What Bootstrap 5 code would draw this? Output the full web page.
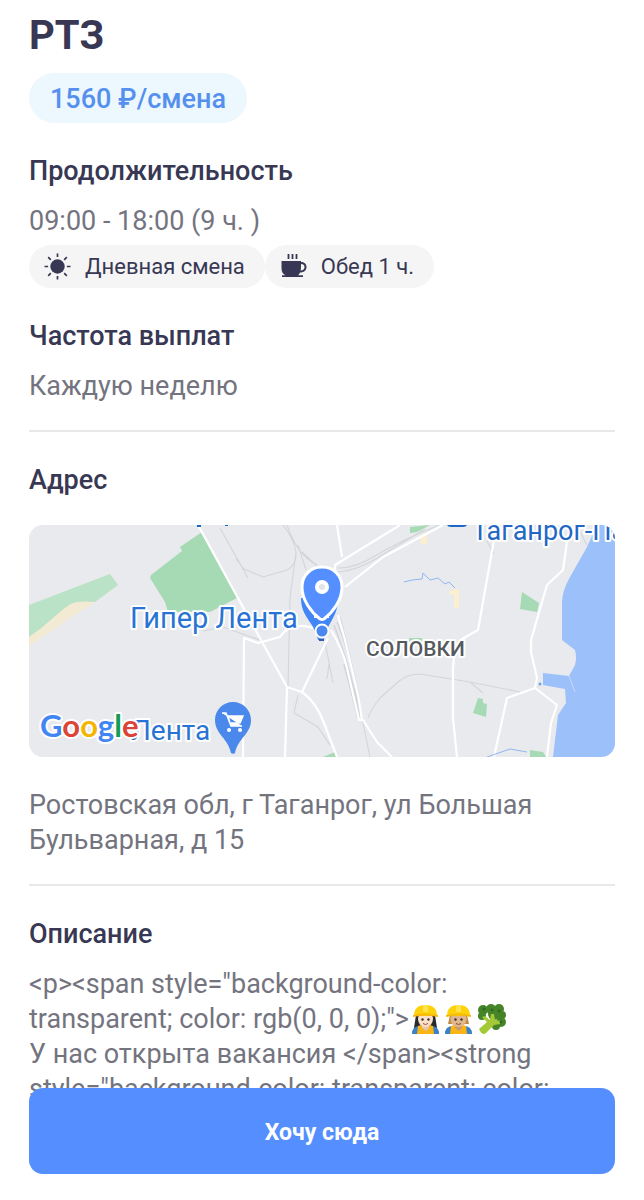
<!DOCTYPE html>
<html lang="ru">
<head>
<meta charset="utf-8">
<meta name="viewport" content="width=device-width, initial-scale=1">
<title>РТЗ</title>
<link href="https://cdn.jsdelivr.net/npm/bootstrap@5.3.0/dist/css/bootstrap.min.css" rel="stylesheet">
<style>
  :root { --ink: #383854; --muted-ink: #74747f; --accent: #548eff; --side: 29px; }
  body { font-family: Roboto, "Liberation Sans", sans-serif; background: #fff; color: var(--muted-ink); font-size: 27px; line-height: 35px; }
  .vacancy { padding: 12px var(--side) 0; }
  .vacancy h1 { font-size: 40px; line-height: 48px; font-weight: 700; color: var(--ink); margin: 0 0 13px; }
  .vacancy h2 { font-size: 27px; line-height: 32px; font-weight: 500; color: var(--ink); margin: 0 0 17px; }
  .block { margin-top: 32px; }
  .pay { background: #edf7fe; color: #5590ee; font-size: 27px; line-height: 34px; font-weight: 500; padding: 9px 21px 7px; }
  .chips { margin-top: 6px; }
  .chip { background: #f5f5f5; color: var(--ink); font-size: 22px; line-height: 27px; padding: 8px 20px 8px 15px; gap: 14px; }
  .chip svg { width: 27px; height: 27px; }
  .rule { height: 2px; background: #e8e8ea; opacity: 1; border: 0; margin: 26px 0 0; }
  .map { border-radius: 14px; margin-top: 29px; }
  .map text { font-family: Roboto, sans-serif; stroke: #fff; stroke-width: 4px; stroke-linejoin: round; paint-order: stroke; }
  .map .brand { font-family: Lato, sans-serif; font-weight: 700; }
  .address { margin: 31px 0 0; }
  .emoji { width: 29px; height: 30px; margin: -4px 2px 0; }
  .action { padding: 0 var(--side) 26px; }
  .action .btn { --bs-btn-color: #fff; --bs-btn-bg: var(--accent); --bs-btn-border-width: 0; --bs-btn-hover-color: #fff; --bs-btn-hover-bg: #3f7cf2; font-size: 23px; line-height: 30px; font-weight: 700; padding: 30px 16px 26px; border-radius: 14px; }
</style>
</head>
<body>
<main class="vacancy">
  <h1>РТЗ</h1>
  <div class="d-flex"><span class="pay rounded-pill">1560 ₽/смена</span></div>

  <section class="block">
    <h2>Продолжительность</h2>
    <p class="m-0">09:00 - 18:00 (9 ч. )</p>
    <div class="chips d-flex flex-wrap">
      <span class="chip rounded-pill d-flex align-items-center">
        <svg viewBox="0 0 27 27" aria-hidden="true"><circle cx="13.5" cy="13.5" r="7.2" fill="#383854"/><path d="M13.5 .5v3.6M13.5 22.9v3.6M.5 13.5h3.6M22.9 13.5h3.6M4.2 4.2l2.6 2.6M20.2 20.2l2.6 2.6M4.2 22.8l2.6-2.6M20.2 6.8l2.6-2.6" stroke="#383854" stroke-width="1.7"/></svg>
        Дневная смена
      </span>
      <span class="chip rounded-pill d-flex align-items-center">
        <svg viewBox="0 0 27 27" aria-hidden="true"><path d="M8.500 1v5M12.500 1v5M16.500 1v5" stroke="#383854" stroke-width="1.800"/><path d="M1.500 8H21v1c3 0 5.500 1.600 5.500 5s-2.500 5.500-6.500 5.500c-.6 1.600-1.200 2.200-2 2.700H23V24H2v-1.800h3.500C3 21 1.500 19 1.500 15zM21 11v3c0 1.500-.1 2.500-.4 3.500 2.600 0 3.900-1.300 3.900-3.500 0-1.900-1.300-3-3.500-3z" fill="#383854" fill-rule="evenodd"/></svg>
        Обед 1 ч.
      </span>
    </div>
  </section>

  <section class="block">
    <h2>Частота выплат</h2>
    <p class="m-0">Каждую неделю</p>
  </section>
  <hr class="rule">

  <section class="block">
    <h2 class="mb-0">Адрес</h2>
    <svg class="map d-block w-100" viewBox="29 525 586 232" role="img" aria-label="Карта">
      <rect x="29" y="525" width="586" height="232" fill="#e8eaed"/>
      <!-- parks and sand -->
      <path d="M29 605 110 574 118 585 95 602H78L29 637z" fill="#b9e2c6"/>
      <path d="M29 637C50 624 66 602 78 602q8-1 17 0L70 618 29 646z" fill="#f3ead4"/>
      <g fill="#a6dab4">
        <path d="M202 532 180 547l2 4-31 24-1 3 15 24 3 10h42l27-14z"/>
        <path d="m522 592 17 11-2 9-17-3zM410 527l20-2-13 7-7 1zM409 638h13v4h-13zM478 698l5 1v4l4 1-1 13-13-4zM530 750l13 2 3 5h-16zM323 757l12-5 2 5z"/>
      </g>
      <path d="M420 535h7v9h-6zM450 591l5-2h4v19h-5v-14l-5 1z" fill="#fbefcf"/>
      <!-- the bay -->
      <path d="m597 525-10 22-17 30q-8 14-8 26v37l13 10q2 8 0 15l-6 11-26-3v12l22 4 1 14-8 12-5 42h62V525z" fill="#9cc0fa"/>
      <path d="M569 676l6 16" stroke="#c8d9f5" fill="none"/>
      <circle cx="540" cy="684" r="1.500" fill="#6ea2ee"/>
      <!-- railways and lanes -->
      <g fill="none" stroke="#d3d5d8" stroke-width="1.100">
        <path d="m220 528 28 50M236 559l8 10 19 8 24-7q10-5 9-18-2-13-13-27M287 525q10 30 30 40M296 552l-6 46-2 89M298 545l8 25M302 552l16 15M337 568q16 1 38-12 26-16 65-31M337 572q22-1 50-20l38-23M325 642l8 41M329 664l-2 15M298 695l-4 18 24 14 12 18M362 718l8 39M368 718q3-9 12-20l18-16q9-8 22-8l50 8 50 10M470 682l13 11M203 631l20-4 40 14M487 541l7 13M579 530l8 15"/>
        <path d="M334 625q14 36 27 92M337 622q13 30 24 92M340 617q9 35 19 80" stroke-width="1.500"/>
        <path d="M345 664q8 28 14 54" stroke-width="4"/>
      </g>
      <!-- roads -->
      <g fill="none" stroke="#fff" stroke-width="2.200" stroke-linejoin="round">
        <path d="m198 525 63 115 26 47 15 5q14 10 22 31l13 34M302 692l26-54"/>
        <path d="m331 630q12 20 16 38l12 52h4l14 22 15 15M338 615l7 25 13 55 4 25M335 570v-5l65-40M345 587l38-30 60-32M494 540l-16 90-16 9-7 9-2 20v50l4 39M567 542l-4 28-16 15-16 55v12l6 26-2 10-28 10-13 59M535 688l22 17-6 18-4 34"/>
        <path d="M337 525l5 32M243 757l1-119 14 5 22-6q10-16 33-9M285 757l2-70"/>
      </g>
      <path d="m404 582 8-2 10-1 1-6 7 7 8-2 7 6 4-2 6 6M487 757l23-8 17 3" fill="none" stroke="#91b6ef"/>
      <!-- place labels -->
      <path d="M197 525h4v2h-4zM225 525h3v1h-3zM447 525h20q-1 2-4 2h-12q-3 0-4-2z" fill="#1d66c4"/>
      <text x="130" y="628" font-size="29" fill="#2873d3">Гипер Лента</text>
      <text x="472" y="540" font-size="27" fill="#2367c5">Таганрог-Па</text>
      <text x="366" y="656" font-size="21" font-weight="500" fill="#56595e">СОЛОВКИ</text>
      <text x="131" y="740" font-size="28" fill="#2873d3">Лента</text>
      <text class="brand" x="40" y="737" font-size="31" fill="#4285f4">G<tspan fill="#db4437">o</tspan><tspan fill="#f4b400">o</tspan><tspan>g</tspan><tspan fill="#0f9d58">l</tspan><tspan fill="#db4437">e</tspan></text>
      <!-- shop pin -->
      <path d="M233 702c10 0 18 8 18 18 0 14-13 18-16 33-1 1-3 1-4 0-3-15-16-19-16-33 0-10 8-18 18-18z" fill="#4a88ec"/>
      <path d="M222 713h4l5 13h11M228 716h15l-3 7h-10z" fill="#fff" stroke="#fff" stroke-width="1.500"/>
      <circle cx="229" cy="730" r="2" fill="#fff"/><circle cx="240" cy="730" r="2" fill="#fff"/>
      <!-- selected pin -->
      <path d="M301 598c0 20 14 24 17 42h6c3-18 14-22 14-42z" fill="#4285f4"/>
      <path d="M314 612h15v6h-15z" fill="#fff"/>
      <path d="M322 567c12 0 20 9 20 20 0 13-9 25-18 32q-2 1-4 0c-9-7-18-19-18-32 0-11 8-20 20-20z" fill="#548eff" stroke="#fff" stroke-width="3"/>
      <circle cx="322" cy="587" r="7" fill="#fff"/><circle cx="322" cy="587" r="3" fill="#dfe4e8"/>
      <circle cx="322" cy="631" r="6.500" fill="#4a88f0" stroke="#fff" stroke-width="2"/>
      <path d="M319 639h5v2h-5z" fill="#315fae"/>
    </svg>
    <p class="address">Ростовская обл, г Таганрог, ул Большая Бульварная, д 15</p>
  </section>
  <hr class="rule">

  <section class="block">
    <h2>Описание</h2>
    <p class="m-0">&lt;p&gt;&lt;span style="background-color:<br>transparent; color: rgb(0, 0, 0);"&gt;<svg class="emoji" viewBox="0 0 29 30" role="img" aria-label="строительница"><path d="M5 11h19l2 13H3z" fill="#282a2d"/><path d="M1 30q0-8 8-8h11q8 0 8 8z" fill="#3c80c6"/><path d="M7 22l3-1 5 5 4-5 3 1 1 8H6z" fill="#f9b514"/><path d="M11 20h7v4l-3 3-4-3z" fill="#e7c5aa"/><ellipse cx="14.500" cy="15" rx="7.500" ry="8" fill="#fae0c8"/><path d="M3 12Q3 1 14.500 1T26 12z" fill="#fdd20b"/><path d="M12 1h5v7h-5z" fill="#ffe34d"/><path d="M2 11q12-3 25 0v2q-12-3-25 0z" fill="#f4b90c"/><circle cx="11.500" cy="15.500" r="1.200" fill="#333"/><circle cx="17.500" cy="15.500" r="1.200" fill="#333"/><path d="M12 19.500q2.500 2 5 0" fill="none" stroke="#a64842"/></svg><svg class="emoji" viewBox="0 0 29 30" role="img" aria-label="строитель"><path d="M6 11h17l2 9H4z" fill="#c38a42"/><path d="M1 30q0-8 8-8h11q8 0 8 8z" fill="#3c80c6"/><path d="M7 22l3-1 5 5 4-5 3 1 1 8H6z" fill="#f9b514"/><path d="M11 20h7v4l-3 3-4-3z" fill="#c99a70"/><ellipse cx="14.500" cy="15" rx="8" ry="8" fill="#e0b78d"/><path d="M3 12Q3 1 14.500 1T26 12z" fill="#fdd20b"/><path d="M12 1h5v7h-5z" fill="#ffe34d"/><path d="M2 11q12-3 25 0v2q-12-3-25 0z" fill="#f4b90c"/><circle cx="11.500" cy="15.500" r="1.200" fill="#333"/><circle cx="17.500" cy="15.500" r="1.200" fill="#333"/><path d="M12 19.500q2.500 2 5 0" fill="none" stroke="#8b4b37"/></svg><svg class="emoji" viewBox="0 0 29 30" role="img" aria-label="брокколи"><g fill="#468527"><circle cx="6" cy="6" r="5"/><circle cx="14" cy="5" r="5"/><circle cx="22" cy="5" r="5"/><circle cx="25" cy="11" r="4"/><circle cx="5" cy="12" r="4"/><circle cx="17" cy="10" r="6"/><circle cx="24" cy="18" r="5"/><circle cx="19" cy="22" r="4"/></g><path d="M2 25l8-7-5-5 3-1 5 4 1-6h3l1 6 6 1-1 3-6 1-8 8q-4 3-7-4z" fill="#a3c936"/><g fill="#2f6b1d"><circle cx="7" cy="5" r="1.500"/><circle cx="15" cy="6" r="1.500"/><circle cx="22" cy="7" r="1.500"/><circle cx="24" cy="18" r="1.500"/></g></svg><br>У нас открыта вакансия &lt;/span&gt;&lt;strong<br>style="background-color: transparent; color:</p>
  </section>
</main>

<div class="action fixed-bottom">
  <button type="button" class="btn w-100 d-block">Хочу сюда</button>
</div>
<script src="https://cdn.jsdelivr.net/npm/bootstrap@5.3.0/dist/js/bootstrap.bundle.min.js"></script>
</body>
</html>
